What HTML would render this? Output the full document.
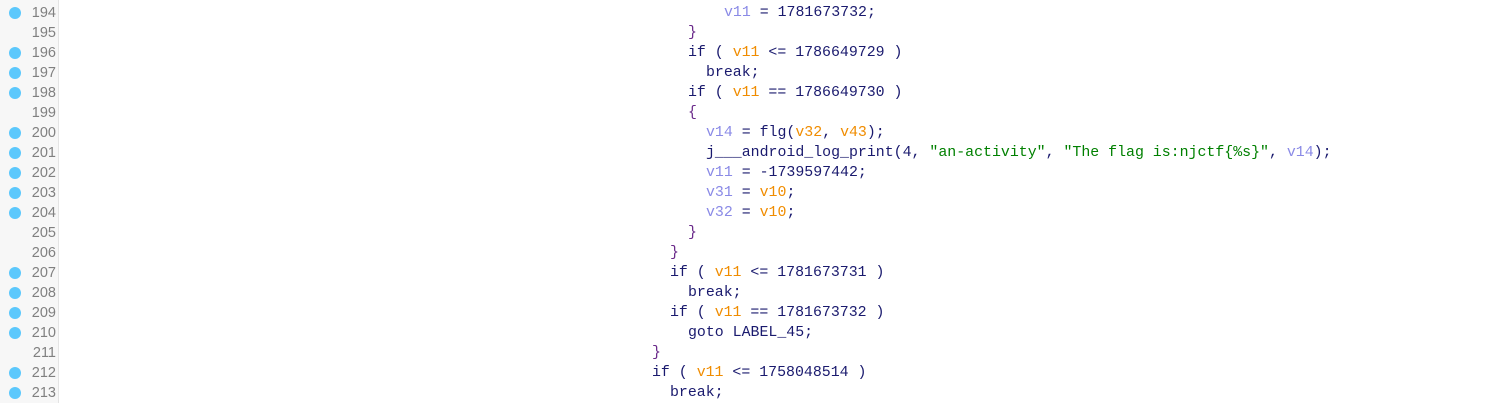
<!DOCTYPE html>
<html><head><style>
body{margin:0;width:1512px;height:403px;overflow:hidden;background:#fff;position:relative;font-family:"Liberation Mono",monospace;font-size:14.9px;}
#g{position:absolute;left:0;top:0;width:58px;height:403px;background:#f7f7f7;border-right:1px solid #e4e4e4;}
.l{position:absolute;height:20px;line-height:20px;white-space:pre;color:#1a1a6e;}
.n{position:absolute;left:0;width:56px;text-align:right;color:#808080;font-family:"Liberation Sans",sans-serif;font-size:14.5px;height:20px;line-height:20px;}
.d{position:absolute;left:9px;width:12px;height:12px;border-radius:50%;background:#5cc8fc;}
.o{color:#f08c00}.v{color:#8a8ae6}.s{color:#008000}.b{color:#6a2a8a}
</style></head><body>
<div id="g"></div>
<div id="c"></div>
<script>
const L=[
[193,1,706,'if ( <span class="o">v11</span> &lt;= 1781673731 )'],
[194,1,724,'<span class="v">v11</span> = 1781673732;'],
[195,0,688,'<span class="b">}</span>'],
[196,1,688,'if ( <span class="o">v11</span> &lt;= 1786649729 )'],
[197,1,706,'break;'],
[198,1,688,'if ( <span class="o">v11</span> == 1786649730 )'],
[199,0,688,'<span class="b">{</span>'],
[200,1,706,'<span class="v">v14</span> = flg(<span class="o">v32</span>, <span class="o">v43</span>);'],
[201,1,706,'j___android_log_print(4, <span class="s">"an-activity"</span>, <span class="s">"The flag is:njctf{%s}"</span>, <span class="v">v14</span>);'],
[202,1,706,'<span class="v">v11</span> = -1739597442;'],
[203,1,706,'<span class="v">v31</span> = <span class="o">v10</span>;'],
[204,1,706,'<span class="v">v32</span> = <span class="o">v10</span>;'],
[205,0,688,'<span class="b">}</span>'],
[206,0,670,'<span class="b">}</span>'],
[207,1,670,'if ( <span class="o">v11</span> &lt;= 1781673731 )'],
[208,1,688,'break;'],
[209,1,670,'if ( <span class="o">v11</span> == 1781673732 )'],
[210,1,688,'goto LABEL_45;'],
[211,0,652,'<span class="b">}</span>'],
[212,1,652,'if ( <span class="o">v11</span> &lt;= 1758048514 )'],
[213,1,670,'break;']];
let h='';
for(const [n,d,x,t] of L){const y=3+20*(n-194);
h+=`<div class="n" style="top:${y}px">${n}</div>`;
if(d)h+=`<div class="d" style="top:${y+4}px"></div>`;
h+=`<div class="l" style="left:${x}px;top:${y}px">${t}</div>`;}
document.getElementById('c').innerHTML=h;
</script>
</body></html>
